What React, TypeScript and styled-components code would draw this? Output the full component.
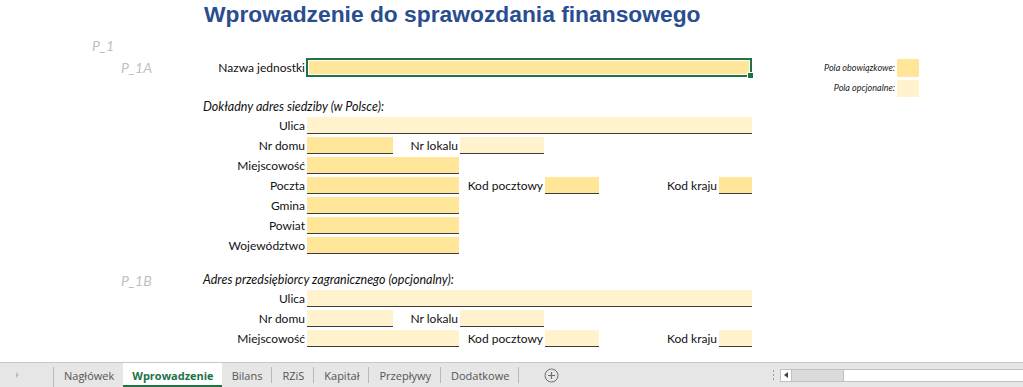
import React from 'react'
import styled, { createGlobalStyle, css } from 'styled-components'

const COLS = '92px 29px 82px 103px 87px 66px 85px 55px 119px 34px 145px 22px 1fr'

const MANDATORY = '#ffe699'
const OPTIONAL = '#fff2cc'
const EXCEL_GREEN = '#217346'

const GlobalStyle = createGlobalStyle`
  html, body {
    margin: 0;
    padding: 0;
    background: #fff;
  }
  body {
    font-family: Lato, 'Noto Sans', sans-serif;
    color: #000;
  }
`

export default function App() {
  return (
    <Page>
      <GlobalStyle />
      <Sheet>
        <Row $h={37}>
          <Title $col={4}>Wprowadzenie do sprawozdania finansowego</Title>
        </Row>
        <Row $h={21}>
          <Code $col={2}>P_1</Code>
        </Row>
        <Row $h={20}>
          <Code $col={3} $lh={20}>P_1A</Code>
          <Label $col={4} $lh={20}>Nazwa jednostki</Label>
          <SelectedField $col={5} $span={6}>
            <FillHandle />
          </SelectedField>
          <LegendText $col={11}>Pola obowiązkowe:</LegendText>
          <Swatch $col={12} $fill={MANDATORY} />
        </Row>
        <Row $h={20}>
          <LegendText $col={11}>Pola opcjonalne:</LegendText>
          <Swatch $col={12} $fill={OPTIONAL} $top={2} />
        </Row>
        <Row $h={19}>
          <Heading $col={4}>Dokładny adres siedziby (w Polsce):</Heading>
        </Row>

        <Row $h={20}>
          <Label $col={4}>Ulica</Label>
          <Field $col={5} $span={6} $fill={OPTIONAL} />
        </Row>
        <Row $h={20}>
          <Label $col={4}>Nr domu</Label>
          <Field $col={5} $fill={MANDATORY} />
          <Label $col={6}>Nr lokalu</Label>
          <Field $col={7} $fill={OPTIONAL} />
        </Row>
        <Row $h={20}>
          <Label $col={4}>Miejscowość</Label>
          <Field $col={5} $span={2} $fill={MANDATORY} />
        </Row>
        <Row $h={20}>
          <Label $col={4}>Poczta</Label>
          <Field $col={5} $span={2} $fill={MANDATORY} />
          <Label $col={7}>Kod pocztowy</Label>
          <Field $col={8} $fill={MANDATORY} />
          <Label $col={9}>Kod kraju</Label>
          <Field $col={10} $fill={MANDATORY} />
        </Row>
        <Row $h={20}>
          <Label $col={4}>Gmina</Label>
          <Field $col={5} $span={2} $fill={MANDATORY} />
        </Row>
        <Row $h={20}>
          <Label $col={4}>Powiat</Label>
          <Field $col={5} $span={2} $fill={MANDATORY} />
        </Row>
        <Row $h={20}>
          <Label $col={4}>Województwo</Label>
          <Field $col={5} $span={2} $fill={MANDATORY} />
        </Row>

        <Row $h={14} />
        <Row $h={19}>
          <Code $col={3} $lh={19}>P_1B</Code>
          <Heading $col={4}>Adres przedsiębiorcy zagranicznego (opcjonalny):</Heading>
        </Row>
        <Row $h={20}>
          <Label $col={4}>Ulica</Label>
          <Field $col={5} $span={6} $fill={OPTIONAL} />
        </Row>
        <Row $h={20}>
          <Label $col={4}>Nr domu</Label>
          <Field $col={5} $fill={OPTIONAL} />
          <Label $col={6}>Nr lokalu</Label>
          <Field $col={7} $fill={OPTIONAL} />
        </Row>
        <Row $h={20}>
          <Label $col={4}>Miejscowość</Label>
          <Field $col={5} $span={2} $fill={OPTIONAL} />
          <Label $col={7}>Kod pocztowy</Label>
          <Field $col={8} $fill={OPTIONAL} />
          <Label $col={9}>Kod kraju</Label>
          <Field $col={10} $fill={OPTIONAL} />
        </Row>
      </Sheet>

      <TabBar>
        <NavArea>
          <NavArrow />
        </NavArea>
        <Tabs>
          <Tab>Nagłówek</Tab>
          <Tab $active>Wprowadzenie</Tab>
          <Tab>Bilans</Tab>
          <Tab>RZiS</Tab>
          <Tab>Kapitał</Tab>
          <Tab>Przepływy</Tab>
          <Tab>Dodatkowe</Tab>
        </Tabs>
        <AddSheet aria-label="Nowy arkusz">
          <svg width="15" height="15" viewBox="0 0 15 15">
            <circle cx="7.5" cy="7.5" r="6.5" fill="none" stroke="#707070" strokeWidth="1" />
            <path d="M7.5 4v7M4 7.5h7" stroke="#707070" strokeWidth="1.2" />
          </svg>
        </AddSheet>
        <Spacer />
        <Splitter>
          <i />
          <i />
          <i />
        </Splitter>
        <HScroll>
          <ScrollButton>
            <svg width="5" height="6" viewBox="0 0 5 6">
              <path d="M4 0v6L0 3z" fill="#444" />
            </svg>
          </ScrollButton>
          <ScrollThumb />
          <ScrollTrack />
        </HScroll>
      </TabBar>
    </Page>
  )
}

type CellProps = { $col: number; $span?: number }

const cell = css<CellProps>`
  grid-column: ${p => p.$col} / span ${p => p.$span ?? 1};
  grid-row: 1;
`

const Page = styled.div`
  width: 1023px;
  height: 387px;
  display: flex;
  flex-direction: column;
  overflow: hidden;
`

const Sheet = styled.div`
  flex: 1;
  display: flex;
  flex-direction: column;
  overflow: hidden;
`

const Row = styled.div<{ $h: number }>`
  display: grid;
  grid-template-columns: ${COLS};
  height: ${p => p.$h}px;
  flex: none;
`

const Title = styled.div<CellProps>`
  ${cell};
  grid-column: ${p => p.$col} / -1;
  padding-left: 1px;
  font-family: 'Liberation Sans', Arial, sans-serif;
  font-weight: 700;
  font-size: 22.8px;
  line-height: 29px;
  color: #2a4d8f;
  white-space: nowrap;
`

const Code = styled.div<CellProps & { $lh?: number }>`
  ${cell};
  font-style: italic;
  font-size: 14px;
  line-height: ${p => p.$lh ?? 18}px;
  color: #bfbfbf;
  white-space: nowrap;
`

const Label = styled.div<CellProps & { $lh?: number }>`
  ${cell};
  text-align: right;
  padding-right: 1px;
  font-size: 12px;
  line-height: ${p => p.$lh ?? 17}px;
  color: #111;
  white-space: nowrap;
`

const Heading = styled.div<CellProps>`
  ${cell};
  grid-column: ${p => p.$col} / span 8;
  font-style: italic;
  font-size: 12.5px;
  line-height: 17px;
  color: #111;
  white-space: nowrap;
`

const Field = styled.div<CellProps & { $fill: string }>`
  ${cell};
  align-self: start;
  height: 16px;
  margin-left: 1px;
  background: ${p => p.$fill};
  border-bottom: 1px solid #3c3c3c;
`

const SelectedField = styled.div<CellProps>`
  ${cell};
  position: relative;
  height: 19px;
  box-sizing: border-box;
  background: ${MANDATORY};
  border: 2px solid ${EXCEL_GREEN};
  box-shadow: inset 0 0 0 1px #fff;
`

const FillHandle = styled.span`
  position: absolute;
  right: -4px;
  bottom: -4px;
  width: 5px;
  height: 5px;
  background: ${EXCEL_GREEN};
  border: 1px solid #fff;
`

const LegendText = styled.div<CellProps>`
  ${cell};
  text-align: right;
  padding-right: 2px;
  font-style: italic;
  font-size: 9px;
  line-height: 20px;
  color: #222;
  white-space: nowrap;
`

const Swatch = styled.div<CellProps & { $fill: string; $top?: number }>`
  ${cell};
  margin: ${p => p.$top ?? 1}px 0 1px;
  background: ${p => p.$fill};
`

const TabBar = styled.div`
  height: 25px;
  flex: none;
  box-sizing: border-box;
  display: flex;
  align-items: stretch;
  background: #e6e6e6;
  border-top: 1px solid #c6c6c6;
  font-family: 'Open Sans', 'Noto Sans', sans-serif;
  font-size: 11px;
  color: #555;
`

const NavArea = styled.div`
  width: 53px;
  display: flex;
  align-items: center;
  padding-left: 16px;
  box-sizing: border-box;
`

const NavArrow = styled.span`
  width: 0;
  height: 0;
  border-top: 3px solid transparent;
  border-bottom: 3px solid transparent;
  border-left: 3px solid #bcbcbc;
`

const Tabs = styled.div`
  display: flex;
  border-left: 1px solid #b9b9b9;
  margin: 4px 0 0;
`

const Tab = styled.div<{ $active?: boolean }>`
  position: relative;
  display: flex;
  align-items: center;
  padding: 0 10px;
  margin-top: -4px;
  white-space: nowrap;
  &::after {
    content: '';
    position: absolute;
    right: 0;
    top: 4px;
    bottom: 4px;
    width: 1px;
    background: #b9b9b9;
  }
  ${p =>
    p.$active &&
    css`
      background: #fff;
      color: ${EXCEL_GREEN};
      font-weight: 700;
      box-shadow: inset 0 -2px 0 ${EXCEL_GREEN};
      margin-left: -1px;
      padding: 0 8px 0 9px;
      &::after {
        display: none;
      }
    `}
`

const AddSheet = styled.div`
  display: flex;
  align-items: center;
  margin-left: 25px;
`

const Spacer = styled.div`
  flex: 1;
`

const Splitter = styled.div`
  width: 14px;
  display: flex;
  flex-direction: column;
  justify-content: center;
  align-items: center;
  gap: 2px;
  i {
    width: 1px;
    height: 2px;
    background: #9a9a9a;
  }
`

const HScroll = styled.div`
  width: 243px;
  display: flex;
  align-self: center;
  height: 13px;
  box-sizing: border-box;
  border: 1px solid #c0c0c0;
  border-right: none;
  background: #fff;
`

const ScrollButton = styled.div`
  width: 10px;
  display: flex;
  align-items: center;
  justify-content: center;
  background: #fff;
  border-right: 1px solid #c0c0c0;
`

const ScrollThumb = styled.div`
  width: 51px;
  background: #dadada;
  border-right: 1px solid #c0c0c0;
`

const ScrollTrack = styled.div`
  flex: 1;
  background: #fff;
`
